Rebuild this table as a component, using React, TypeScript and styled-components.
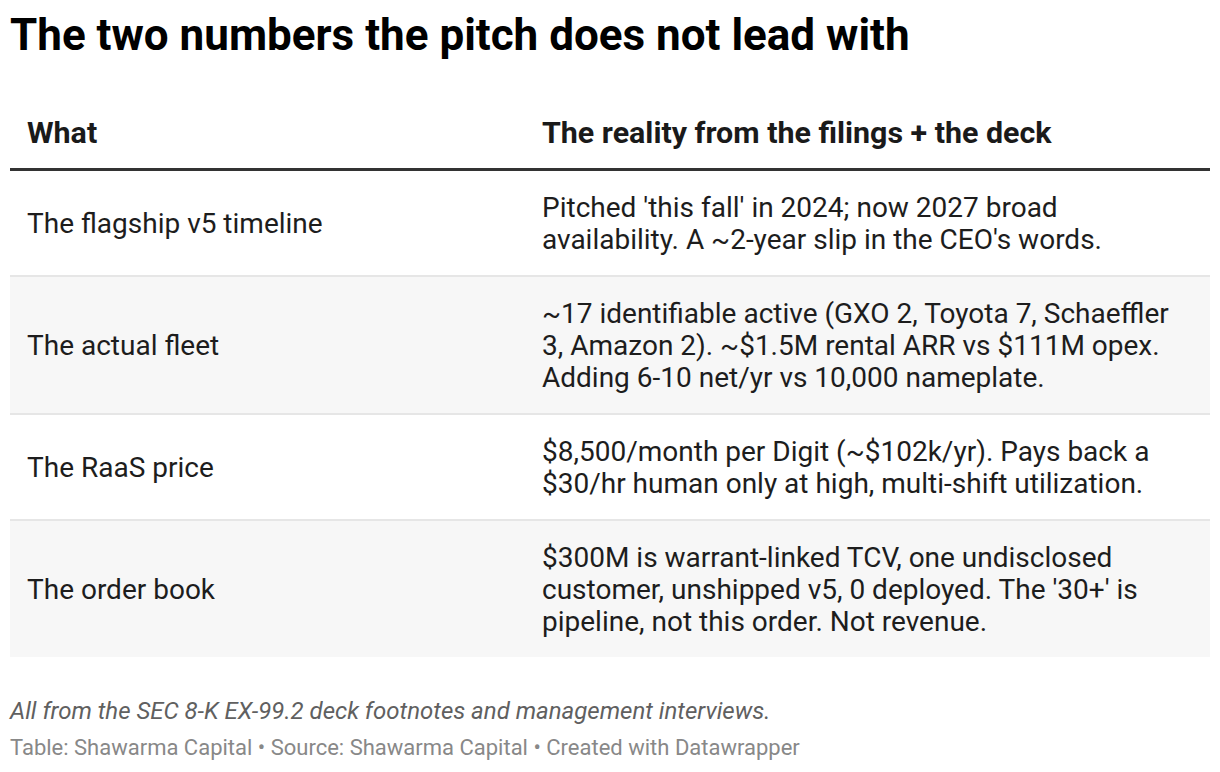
import React from "react";
import styled, { createGlobalStyle } from "styled-components";

const Global = createGlobalStyle`
  html, body { margin: 0; padding: 0; background: #fff; }
  body { font-family: Roboto, "Liberation Sans", Arial, sans-serif; color: #181818; }
`;

const Page = styled.div`
  padding: 9px 10px 0 10px;
  width: 1200px;
`;

const Title = styled.h1`
  margin: 0;
  font-size: 44px;
  line-height: 52px;
  font-weight: 700;
  color: #000;
`;

const Table = styled.div`
  margin-top: 56px;
  display: grid;
  grid-template-columns: 515px 1fr;
`;

const HeadCell = styled.div`
  font-size: 30.4px;
  font-weight: 700;
  line-height: 32px;
  color: #1a1a1a;
  padding: 0 17px 19px 17px;
  border-bottom: 3px solid #333;
`;

const Cell = styled.div<{ $shade: boolean; $last: boolean }>`
  font-size: 28px;
  line-height: 32px;
  color: #1d1d1d;
  padding: 21px 17px 19px 17px;
  display: flex;
  align-items: center;
  background: ${(p) => (p.$shade ? "#f7f7f7" : "#fff")};
  border-bottom: ${(p) => (p.$last ? "none" : "2px solid #e6e6e6")};
`;

const Notes = styled.div`
  margin-top: 39px;
  font-size: 24px;
  line-height: 30px;
  font-style: italic;
  color: #606060;
`;

const Byline = styled.div`
  margin-top: 7px;
  font-size: 22px;
  line-height: 30px;
  color: #888;
`;

const rows: [string, string][] = [
  [
    "The flagship v5 timeline",
    "Pitched 'this fall' in 2024; now 2027 broad availability. A ~2-year slip in the CEO's words.",
  ],
  [
    "The actual fleet",
    "~17 identifiable active (GXO 2, Toyota 7, Schaeffler 3, Amazon 2). ~$1.5M rental ARR vs $111M opex. Adding 6-10 net/yr vs 10,000 nameplate.",
  ],
  [
    "The RaaS price",
    "$8,500/month per Digit (~$102k/yr). Pays back a $30/hr human only at high, multi-shift utilization.",
  ],
  [
    "The order book",
    "$300M is warrant-linked TCV, one undisclosed customer, unshipped v5, 0 deployed. The '30+' is pipeline, not this order. Not revenue.",
  ],
];

export default function App() {
  return (
    <>
      <Global />
      <Page>
        <Title>The two numbers the pitch does not lead with</Title>
        <Table>
          <HeadCell>What</HeadCell>
          <HeadCell>The reality from the filings + the deck</HeadCell>
          {rows.map(([a, b], i) => (
            <React.Fragment key={a}>
              <Cell $shade={i % 2 === 1} $last={i === rows.length - 1}>{a}</Cell>
              <Cell $shade={i % 2 === 1} $last={i === rows.length - 1}>{b}</Cell>
            </React.Fragment>
          ))}
        </Table>
        <Notes>All from the SEC 8-K EX-99.2 deck footnotes and management interviews.</Notes>
        <Byline>Table: Shawarma Capital • Source: Shawarma Capital • Created with Datawrapper</Byline>
      </Page>
    </>
  );
}
